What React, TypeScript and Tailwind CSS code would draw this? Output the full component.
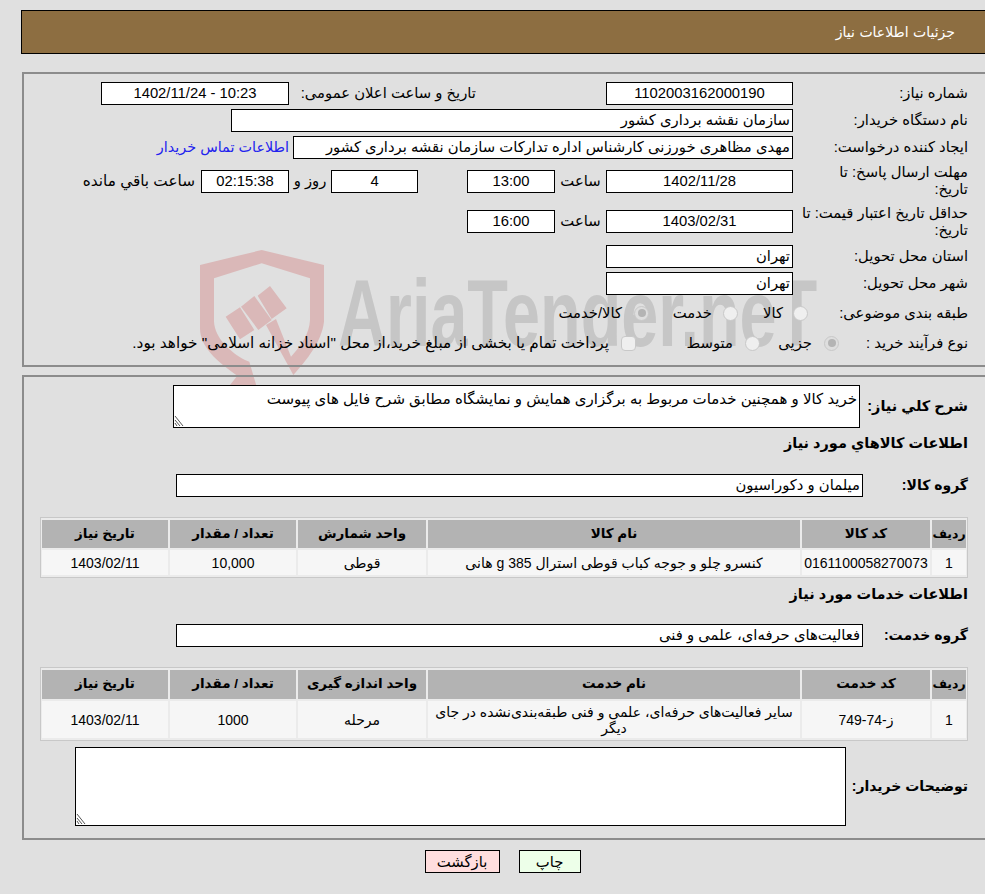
import type { ReactNode } from 'react'

const boxClass = 'flex shrink-0 items-center border border-black bg-white text-[14.8px] leading-none'

function Box({ className = '', center, children }: { className?: string; center?: boolean; children?: ReactNode }) {
  return (
    <div className={`${boxClass} ${center ? 'justify-center' : 'pr-0.5'} ${className}`}>
      {children}
    </div>
  )
}

function Row({ label, className = '', children }: { label: ReactNode; className?: string; children?: ReactNode }) {
  return (
    <div className={`flex items-center ${className}`}>
      <div className="w-[175px] shrink-0 text-[14.8px] leading-[17px]">{label}</div>
      {children}
    </div>
  )
}

function Radio({ on, className = '' }: { on?: boolean; className?: string }) {
  return (
    <span className={`flex h-[15px] w-[15px] shrink-0 items-center justify-center rounded-full border border-[#c8c8c8] ${on ? 'bg-[#dedede]' : 'bg-[#efefef]'} ${className}`}>
      {on && <span className="h-[8px] w-[8px] rounded-full bg-[#b4b4b4]" />}
    </span>
  )
}

function Watermark() {
  return (
    <div className="pointer-events-none absolute left-[190px] top-[245px] h-[200px] w-[640px]">
      <svg width="170" height="195" viewBox="0 0 510 585" className="absolute left-0 top-0">
        <path
          d="M215 15 L402 60 V230 C395 290 350 345 310 390 L228 240 L258 222 L303 335 C335 300 358 265 360 225 V100 L215 55 L72 100 V230 C75 280 120 320 165 345 L178 350 L200 425 L120 420 L142 392 C80 350 30 305 30 250 V60 Z"
          fill="#dab8b8"
        />
        <path d="M107 215 L150 187 L193 255 L150 283 Z M153 185 L193 153 L245 225 L205 255 Z M203 152 L240 123 L290 190 L245 222 Z" fill="#dab8b8" />
      </svg>
      <span dir="ltr" className="absolute left-[148px] top-[21px] inline-block origin-left scale-x-[0.7] whitespace-nowrap font-['Liberation_Sans',sans-serif] text-[95px] font-bold leading-none text-[#c6c6c6]">
        AriaTender.neT
      </span>
    </div>
  )
}

function Grip() {
  return (
    <svg width="12" height="12" viewBox="0 0 12 12" className="pointer-events-none absolute bottom-px left-px">
      <path d="M1 1 L9 11 M1 5 L6 11 M1 8 L3 11" stroke="#555555" strokeWidth="1" fill="none" />
    </svg>
  )
}

function DataTable({ heads, cells, headClass, rowClass }: { heads: string[]; cells: string[]; headClass: string; rowClass: string }) {
  const widths = ['w-[34px]', 'w-[128px]', 'w-[372px]', 'w-[128px]', 'w-[126px]', 'w-[126px]']
  return (
    <div className="ml-[16px] mr-[17px] flex flex-col gap-0.5 border border-[#c8c8c8] bg-[#ebebeb] px-px py-0.5">
      <div className="flex gap-0.5">
        {heads.map((h, i) => (
          <div key={i} className={`flex items-center justify-center bg-[#b3b3b3] font-bold ${i === 0 ? 'text-[12.5px]' : 'text-[13.5px]'} ${headClass} ${widths[i]} shrink-0 whitespace-nowrap`}>
            {h}
          </div>
        ))}
      </div>
      <div className="flex gap-0.5">
        {cells.map((c, i) => (
          <div key={i} className={`flex items-center justify-center bg-[#f6f6f6] text-center text-[14px] leading-[16px] ${rowClass} ${widths[i]} shrink-0 ${i === 2 ? 'px-1' : ''}`}>
            {c}
          </div>
        ))}
      </div>
    </div>
  )
}

export default function App() {
  return (
    <div dir="rtl" className="relative h-[894px] overflow-hidden bg-[#e0e0e0] pt-2.5 font-['Liberation_Sans','DejaVu_Sans',sans-serif] text-black">
      <Watermark />

      <header className="relative ml-[21px] flex h-11 items-center border-y border-l border-black bg-[#8d6e41] pr-[30px] font-['DejaVu_Sans',sans-serif] text-[14px] text-white">
        جزئیات اطلاعات نیاز
      </header>

      <section className="relative ml-[22px] mt-[18px] h-[295px] border-2 border-r-0 border-[#8c8c8c] pr-[17px] pt-2">
        <Row label="شماره نیاز:" className="h-[23px]">
          <Box center className="h-[23px] w-[187px]">1102003162000190</Box>
          <div className="mr-[130px] w-[187px] text-[14.8px]">تاریخ و ساعت اعلان عمومی:</div>
          <Box center className="h-[23px] w-[188px]">10:23 - 1402/11/24</Box>
        </Row>
        <Row label="نام دستگاه خریدار:" className="mt-1 h-[23px]">
          <Box className="h-[23px] w-[562px]">سازمان نقشه برداری کشور</Box>
        </Row>
        <Row label="ایجاد کننده درخواست:" className="mt-1 h-[23px]">
          <Box className="h-[23px] w-[500px]">مهدی مظاهری خورزنی کارشناس اداره تدارکات سازمان نقشه برداری کشور</Box>
          <a href="#" className="mr-1 whitespace-nowrap text-[14.4px] text-[#2222ee]">اطلاعات تماس خریدار</a>
        </Row>
        <Row label={<>مهلت ارسال پاسخ: تا<br />تاریخ:</>} className="mt-px h-[42px]">
          <Box center className="h-[23px] w-[187px]">1402/11/28</Box>
          <span className="w-[51px] text-center text-[14.8px]">ساعت</span>
          <Box center className="h-[23px] w-[88px]">13:00</Box>
          <span className="w-[49px]" />
          <Box center className="h-[23px] w-[87px]">4</Box>
          <span className="w-[42px] text-center text-[14.8px]">روز و</span>
          <Box center className="h-[23px] w-[88px] bg-[#ffffe6]">02:15:38</Box>
          <span className="mr-1.5 whitespace-nowrap text-[15.3px]">ساعت باقي مانده</span>
        </Row>
        <Row label={<>حداقل تاریخ اعتبار قیمت: تا<br />تاریخ:</>} className="h-[39px]">
          <Box center className="h-[23px] w-[187px]">1403/02/31</Box>
          <span className="w-[51px] text-center text-[14.8px]">ساعت</span>
          <Box center className="h-[23px] w-[88px]">16:00</Box>
        </Row>
        <Row label="استان محل تحویل:" className="mt-1 h-[23px]">
          <Box className="h-[23px] w-[187px]">تهران</Box>
        </Row>
        <Row label="شهر محل تحویل:" className="mt-1 h-[23px]">
          <Box className="h-[23px] w-[187px]">تهران</Box>
        </Row>
        <Row label="طبقه بندی موضوعی:" className="mt-1.5 h-6 text-[14.8px]">
          <Radio className="mr-[-15px]" />
          <span className="mr-[10px] w-[45px]">کالا</span>
          <Radio />
          <span className="mr-[11px] w-[63px]">خدمت</span>
          <Radio on />
          <span className="mr-3">کالا/خدمت</span>
        </Row>
        <Row label="نوع فرآیند خرید :" className="mt-1.5 h-6 text-[14.8px]">
          <Radio on className="mr-[-46px]" />
          <span className="mr-3 w-[52px]">جزیی</span>
          <Radio />
          <span className="mr-3 w-[97px]">متوسط</span>
          <span className="h-[15px] w-[15px] shrink-0 rounded-sm border border-[#c8c8c8] bg-[#efefef]" />
          <span className="mr-3 whitespace-nowrap text-[15.3px]">پرداخت تمام یا بخشی از مبلغ خرید،از محل &quot;اسناد خزانه اسلامی&quot; خواهد بود.</span>
        </Row>
      </section>

      <section className="relative ml-[22px] mt-2 h-[465px] border-2 border-r-0 border-[#8c8c8c] pt-2">
        <div className="flex items-center pr-[17px]">
          <div className="w-[108px] shrink-0 text-[14.5px] font-bold">شرح کلي نیاز:</div>
          <div className="relative h-[43px] w-[687px] shrink-0">
            <textarea
              readOnly
              dir="rtl"
              className="block h-full w-full resize-none border border-black bg-white px-0.5 pt-1 text-[15px] leading-[17px] outline-none"
              defaultValue="خرید کالا و همچنین خدمات مربوط به برگزاری همایش و نمایشگاه مطابق شرح فایل های پیوست"
            />
            <Grip />
          </div>
        </div>
        <h3 className="mt-[5px] h-[20px] pr-[17px] text-[14.5px] font-bold leading-5">اطلاعات کالاهاي مورد نیاز</h3>
        <div className="mt-[21px] flex items-center pr-[17px]">
          <div className="w-[105px] shrink-0 text-[14px] font-bold">گروه کالا:</div>
          <Box className="h-[23px] w-[687px]">میلمان و دکوراسیون</Box>
        </div>
        <div className="mt-5">
          <DataTable
            heads={['ردیف', 'کد کالا', 'نام کالا', 'واحد شمارش', 'تعداد / مقدار', 'تاریخ نیاز']}
            cells={['1', '0161100058270073', 'کنسرو چلو و جوجه کباب قوطی استرال 385 g هانی', 'قوطی', '10,000', '1403/02/11']}
            headClass="h-[28px]"
            rowClass="h-[25px]"
          />
        </div>
        <h3 className="mt-[6px] h-5 pr-[17px] text-[14.5px] font-bold leading-5">اطلاعات خدمات مورد نیاز</h3>
        <div className="mt-5 flex items-center pr-[17px]">
          <div className="w-[105px] shrink-0 text-[14px] font-bold">گروه خدمت:</div>
          <Box className="h-[23px] w-[687px]">فعالیت‌های حرفه‌ای، علمی و فنی</Box>
        </div>
        <div className="mt-5">
          <DataTable
            heads={['ردیف', 'کد خدمت', 'نام خدمت', 'واحد اندازه گیری', 'تعداد / مقدار', 'تاریخ نیاز']}
            cells={['1', 'ز-74-749', 'سایر فعالیت‌های حرفه‌ای، علمی و فنی طبقه‌بندی‌نشده در جای دیگر', 'مرحله', '1000', '1403/02/11']}
            headClass="h-[29px]"
            rowClass="h-[37px]"
          />
        </div>
        <div className="mt-1.5 flex items-center pr-[17px]">
          <div className="w-[122px] shrink-0 whitespace-nowrap text-[14px] font-bold">توضیحات خریدار:</div>
          <div className="relative h-[79px] w-[771px] shrink-0">
            <textarea readOnly className="block h-full w-full resize-none border border-black bg-white outline-none" />
            <Grip />
          </div>
        </div>
      </section>

      <div className="relative mt-2.5 flex justify-center gap-[19px] pl-[20px]">
        <button type="button" className="h-[23px] w-[62px] border border-black bg-[#edffe9] text-[14.8px]">چاپ</button>
        <button type="button" className="h-[23px] w-[75px] border border-black bg-[#ffdede] text-[14.8px]">بازگشت</button>
      </div>
    </div>
  )
}
